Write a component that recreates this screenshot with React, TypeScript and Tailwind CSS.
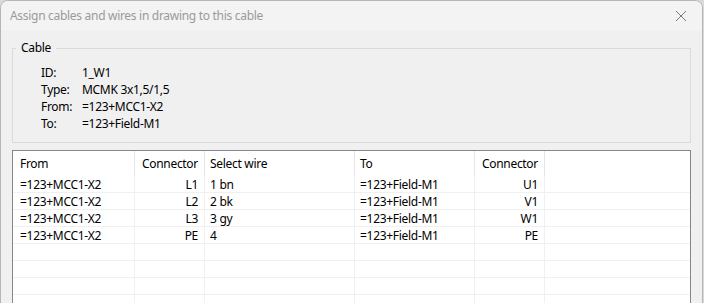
const rows = [
  { from: "=123+MCC1-X2", c1: "L1", wire: "1 bn", to: "=123+Field-M1", c2: "U1" },
  { from: "=123+MCC1-X2", c1: "L2", wire: "2 bk", to: "=123+Field-M1", c2: "V1" },
  { from: "=123+MCC1-X2", c1: "L3", wire: "3 gy", to: "=123+Field-M1", c2: "W1" },
  { from: "=123+MCC1-X2", c1: "PE", wire: "4", to: "=123+Field-M1", c2: "PE" },
  { from: "", c1: "", wire: "", to: "", c2: "" },
  { from: "", c1: "", wire: "", to: "", c2: "" },
  { from: "", c1: "", wire: "", to: "", c2: "" },
  { from: "", c1: "", wire: "", to: "", c2: "" },
];

const info = [
  ["ID:", "1_W1"],
  ["Type:", "MCMK 3x1,5/1,5"],
  ["From:", "=123+MCC1-X2"],
  ["To:", "=123+Field-M1"],
];

const cols = "grid grid-cols-[122px_70px_150px_120px_70px_1fr]";

export default function App() {
  return (
    <div className="w-[704px] h-[303px] overflow-hidden bg-[#d9d9d9] font-['Noto_Sans',sans-serif] text-[12px] tracking-[-0.3px] text-black">
      <div className="w-[703px] h-[320px] bg-[#f0f0f0] border border-[#b5b5b5] rounded-t-[8px] overflow-hidden">
        {/* title bar */}
        <div className="h-[30px] bg-[#f3f3f3] flex items-center pl-[9px] pr-[8px]">
          <span className="flex-1 text-[#9a9a9a] leading-none">Assign cables and wires in drawing to this cable</span>
          <svg width="12" height="12" viewBox="0 0 12 12" className="mr-[7px]">
            <path d="M1 1 L11 11 M11 1 L1 11" stroke="#7a7a7a" strokeWidth="1" fill="none" />
          </svg>
        </div>

        {/* cable group */}
        <fieldset className="mx-[11px] mt-[9px] border border-[#dadada] pb-[10px]">
          <legend className="ml-[3px] px-[5px] leading-[16px]">Cable</legend>
          <div className="pl-[28px] pt-[8px]">
            {info.map(([k, v]) => (
              <div key={k} className="flex h-[17px] items-center">
                <span className="w-[41px]">{k}</span>
                <span>{v}</span>
              </div>
            ))}
          </div>
        </fieldset>

        {/* list */}
        <div className="mx-[11px] mt-[7px] border border-[#828790] bg-white">
          <div className={`${cols} h-[25px] items-stretch`}>
            <div className="pl-[7px] flex items-center border-r border-[#e5e5e5]">From</div>
            <div className="pr-[6px] flex items-center justify-end border-r border-[#e5e5e5]">Connector</div>
            <div className="pl-[5px] flex items-center border-r border-[#e5e5e5]">Select wire</div>
            <div className="pl-[5px] flex items-center border-r border-[#e5e5e5]">To</div>
            <div className="pr-[6px] flex items-center justify-end border-r border-[#e5e5e5]">Connector</div>
            <div />
          </div>
          {rows.map((r, i) => (
            <div key={i} className={`${cols} h-[17px] border-b border-[#f0f0f0]`}>
              <div className="pl-[7px] flex items-center border-r border-[#f0f0f0]">{r.from}</div>
              <div className="pr-[6px] flex items-center justify-end border-r border-[#f0f0f0]">{r.c1}</div>
              <div className="pl-[5px] flex items-center border-r border-[#f0f0f0]">{r.wire}</div>
              <div className="pl-[5px] flex items-center border-r border-[#f0f0f0]">{r.to}</div>
              <div className="pr-[6px] flex items-center justify-end border-r border-[#f0f0f0]">{r.c2}</div>
              <div />
            </div>
          ))}
        </div>
      </div>
    </div>
  );
}
